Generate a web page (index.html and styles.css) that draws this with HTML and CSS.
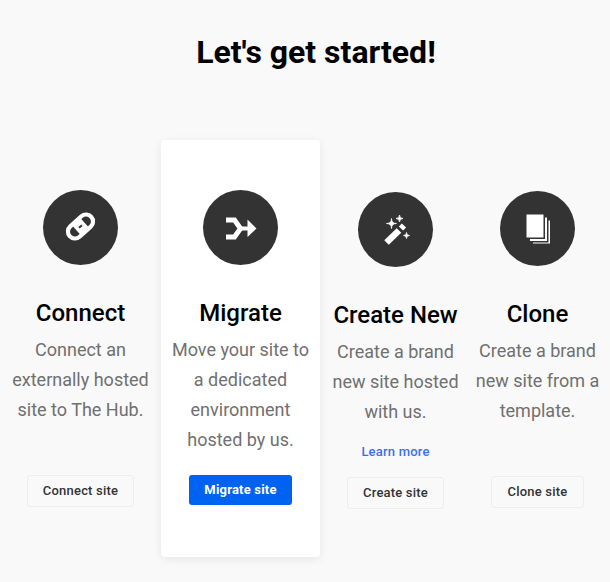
FILE: index.html
```html
<!DOCTYPE html>
<html lang="en">
<head>
    <meta charset="UTF-8">
    <title>Let's get started!</title>
    <link rel="stylesheet" href="styles.css">
</head>
<body>
    <h1 class="page-title">Let's get started!</h1>
    <div class="options">
        <div class="option option-connect">
            <div class="option-icon">
                <svg width="36" height="36" viewBox="0 0 36 36"><g transform="translate(-0.5 -1.5) rotate(-42 18 18)"><rect x="3.500" y="11" width="29" height="14" rx="7" fill="none" stroke="#fff" stroke-width="4.200"/><rect x="12.500" y="11" width="11" height="14" fill="#fff"/><rect x="16" y="17" width="4" height="2" fill="#333"/></g></svg>
            </div>
            <h2 class="option-title">Connect</h2>
            <p class="option-text option-text-tall">Connect an externally hosted site to The Hub.</p>
            <a class="btn" href="#">Connect site</a>
        </div>
        <div class="option option-migrate">
            <div class="option-icon">
                <svg width="32" height="32" viewBox="0 0 32 32"><path d="M1 8h8.500l6 8.500-6 8.500H1" fill="none" stroke="#fff" stroke-width="5"/><path d="M14 14.500h8.500V7.500l9 9-9 8.500v-6.500H14z" fill="#fff"/></svg>
            </div>
            <h2 class="option-title">Migrate</h2>
            <p class="option-text">Move your site to a dedicated environment hosted by us.</p>
            <a class="btn btn-primary" href="#">Migrate site</a>
        </div>
        <div class="option option-create">
            <div class="option-icon">
                <svg width="32" height="32" viewBox="0 0 32 32"><path d="M6.500 28.500 19 16.500" fill="none" stroke="#fff" stroke-width="6.500"/><path d="M21 14.500 24 11.500" fill="none" stroke="#fff" stroke-width="6"/><path d="M11.500 4.500Q11.500 9.500 16.500 9.500 11.500 9.500 11.500 14.500 11.500 9.500 6.500 9.500 11.500 9.500 11.500 4.500zM19.500 1Q19.500 4.500 23 4.500 19.500 4.500 19.500 8 19.500 4.500 16 4.500 19.500 4.500 19.500 1zM26.500 18.500Q26.500 21.500 29.500 21.500 26.500 21.500 26.500 24.500 26.500 21.500 23.500 21.500 26.500 21.500 26.500 18.500z" fill="#fff" stroke="#fff" stroke-width="0.800"/></svg>
            </div>
            <h2 class="option-title">Create New</h2>
            <p class="option-text option-text-short">Create a brand new site hosted with us.</p>
            <a class="learn-more" href="#">Learn more</a>
            <a class="btn" href="#">Create site</a>
        </div>
        <div class="option option-clone">
            <div class="option-icon">
                <svg width="32" height="32" viewBox="0 0 32 32"><path d="M4.500 1.500h17v23h-17z" fill="#fff"/><path d="M23 4.500h2V28H8v-2h15zM26.500 7.500H28v23H11v-1h15.500z" fill="#fff"/></svg>
            </div>
            <h2 class="option-title">Clone</h2>
            <p class="option-text option-text-tall">Create a brand new site from a template.</p>
            <a class="btn" href="#">Clone site</a>
        </div>
    </div>
</body>
</html>
```
FILE: styles.css
```css
* {
    margin: 0;
    padding: 0;
    box-sizing: border-box;
}

body {
    font-family: Roboto, sans-serif;
    background: #f9f9f9;
    color: #000;
    height: 582px;
    overflow: hidden;
}

.page-title {
    font-size: 32px;
    font-weight: 700;
    line-height: 38px;
    text-align: center;
    padding: 33px 0 0 22px;
    margin-bottom: 69px;
}

.options {
    display: flex;
    align-items: flex-start;
}

.option {
    display: flex;
    flex-direction: column;
    align-items: center;
    text-align: center;
}

.option-connect {
    width: 161px;
    margin-top: 50px;
    padding: 0 8px;
}

.option-migrate {
    width: 159px;
    padding: 50px 8px 52px;
    background: #fff;
    border-radius: 4px;
    box-shadow: 0 2px 10px rgba(0, 0, 0, 0.08);
}

.option-create {
    width: 151px;
    margin-top: 52px;
    padding: 0 8px;
}

.option-clone {
    width: 133px;
    margin-top: 51px;
    padding: 0 2px;
}

.option-icon {
    width: 75px;
    height: 75px;
    border-radius: 50%;
    background: #333;
    display: flex;
    align-items: center;
    justify-content: center;
    margin-bottom: 32px;
}

.option-title {
    font-size: 24px;
    font-weight: 500;
    line-height: 32px;
    margin-bottom: 6px;
}

.option-text {
    font-size: 18px;
    line-height: 30px;
    color: #707070;
    margin-bottom: 20px;
}

.option-text-tall {
    min-height: 120px;
}

.option-text-short {
    margin-bottom: 15px;
}

.learn-more {
    font-size: 13px;
    font-weight: 500;
    line-height: 20px;
    letter-spacing: 0.2px;
    color: #3a6ff0;
    text-decoration: none;
    margin-bottom: 15px;
}

.btn {
    display: inline-block;
    font-size: 13px;
    font-weight: 500;
    line-height: 16px;
    letter-spacing: 0.2px;
    color: #333;
    text-decoration: none;
    padding: 7px 15px;
    border: 1px solid #eee;
    border-radius: 3px;
}

.option-clone .btn {
    padding: 7px 16px;
}

.btn-primary {
    background: #0062f0;
    border: 0;
    padding: 7px 15.5px;
    font-weight: 700;
    color: #fff;
}
```
